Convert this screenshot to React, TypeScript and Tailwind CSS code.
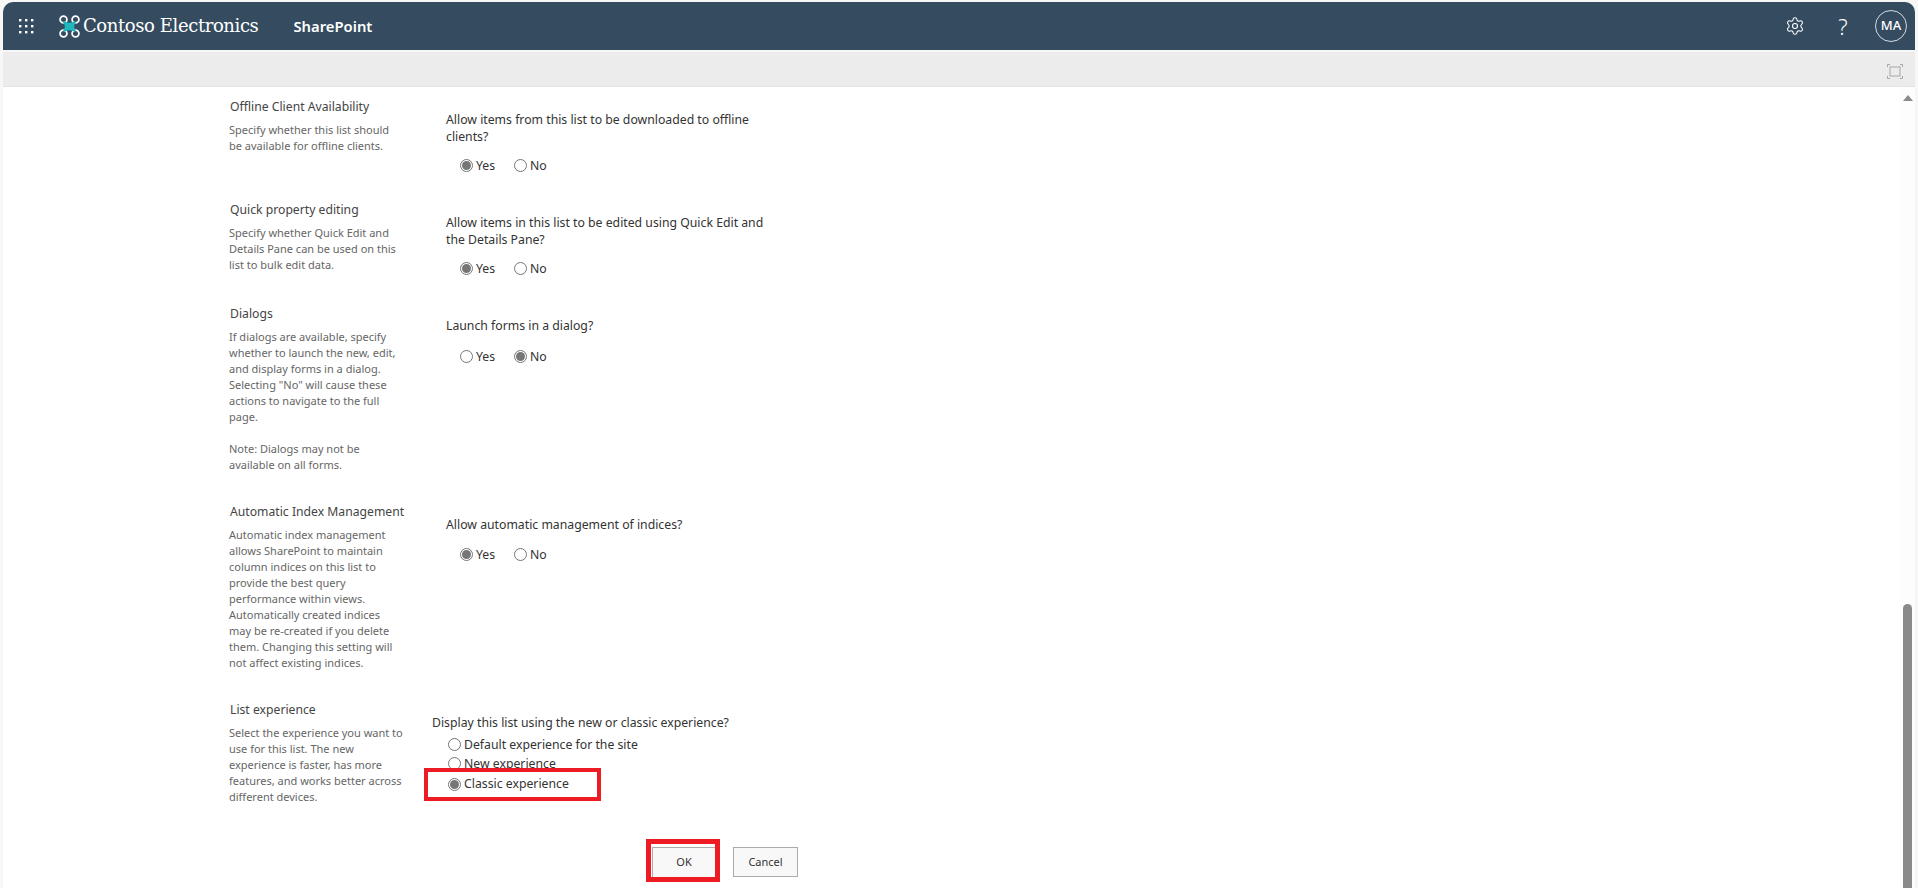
import { Settings } from 'lucide-react'

const Radio = ({ checked = false }: { checked?: boolean }) => (
  <span className="flex h-[13px] w-[13px] shrink-0 items-center justify-center rounded-full border border-[#767676] bg-white">
    {checked && <span className="h-[9px] w-[9px] rounded-full bg-[#767676]" />}
  </span>
)

const YesNo = ({ yes = true, top }: { yes?: boolean; top: string }) => (
  <div className={`flex items-center pl-[14px] text-[12.25px] leading-[17px] text-[#333] ${top}`}>
    <Radio checked={yes} />
    <span className="ml-[3px] w-[38px]">Yes</span>
    <Radio checked={!yes} />
    <span className="ml-[3px]">No</span>
  </div>
)

const Section = ({ title, desc, height, children }: { title: string; desc: string[]; height: string; children: React.ReactNode }) => (
  <section className={`flex ${height}`}>
    <div className="w-[217px] shrink-0">
      <h3 className="pl-px text-[12.2px] leading-[17px] text-[#444]">{title}</h3>
      <div className="mt-[7px] text-[11px] leading-[16px] text-[#666]">
        {desc.map((line, i) => (
          <p key={i} className="h-4 whitespace-nowrap">{line}</p>
        ))}
      </div>
    </div>
    {children}
  </section>
)

const Question = ({ lines, pt = 'pt-[13px]' }: { lines: string[]; pt?: string }) => (
  <div className={`${pt} text-[12.25px] leading-[17px] text-[#333]`}>
    {lines.map((l) => (
      <p key={l} className="whitespace-nowrap">{l}</p>
    ))}
  </div>
)

export default function App() {
  return (
    <div className="h-[888px] w-full overflow-hidden bg-[#f7f7f7] pl-[3px] pr-[3px] pt-[2px] font-['Noto_Sans',sans-serif]">
      <header className="flex h-[48px] items-center rounded-t-[10px] bg-[#344b60] text-white">
        <svg className="ml-[15px]" width="16" height="16" viewBox="0 0 16 16" fill="#fff">
          {[1, 7, 13].map((y) =>
            [1, 7, 13].map((x) => <rect key={`${x}-${y}`} x={x} y={y} width="2.4" height="2.4" />)
          )}
        </svg>
        <svg className="ml-[25px]" width="21" height="23" viewBox="0 0 21 23" fill="none">
          <g stroke="#fff" strokeWidth="1.8">
            <circle cx="4.5" cy="4.5" r="3.4" />
            <circle cx="16.5" cy="4.5" r="3.4" />
            <circle cx="4.5" cy="18.5" r="3.4" />
            <circle cx="16.5" cy="18.5" r="3.4" />
          </g>
          <path d="M5 6 Q10.5 9.5 16 6 L17 7.5 Q13.5 11.5 17 15.5 L16 17 Q10.5 13.5 5 17 L4 15.5 Q7.5 11.5 4 7.5Z" fill="#21b5bd" />
        </svg>
        <span className="ml-[3px] whitespace-nowrap font-['DejaVu_Serif',serif] text-[18px] leading-none tracking-[-0.4px]">Contoso Electronics</span>
        <span className="ml-[35px] text-[14.8px] font-semibold">SharePoint</span>
        <div className="ml-auto flex items-center">
          <Settings size={20} strokeWidth={1.3} />
          <span className="ml-[30px] w-[16px] text-center text-[22px] font-light leading-none">?</span>
          <div className="ml-[24px] mr-[8px] flex h-[32px] w-[32px] items-center justify-center rounded-full border border-[#d5dbe0] text-[13px] font-medium">MA</div>
        </div>
      </header>
      <div className="mt-[2px] flex h-[35px] items-center justify-end border-b border-[#e4e4e4] bg-[#ececec] pr-[12px] pt-[5px]">
        <svg width="16" height="15" viewBox="0 0 16 15" fill="none" stroke="#a6a6a6">
          <path d="M.5 3V.5H3M13 .5h2.5V3M.5 12v2.5H3M13 14.5h2.5V12" />
          <rect x="3" y="3" width="10" height="9" />
        </svg>
      </div>
      <div className="flex h-[801px] bg-white">
        <main className="flex-1 pl-[226px] pt-[11px]">
          <Section
            title="Offline Client Availability"
            desc={['Specify whether this list should', 'be available for offline clients.']}
            height="h-[103px]"
          >
            <div>
              <Question lines={['Allow items from this list to be downloaded to offline', 'clients?']} />
              <YesNo top="mt-[12px]" />
            </div>
          </Section>
          <Section
            title="Quick property editing"
            desc={['Specify whether Quick Edit and', 'Details Pane can be used on this', 'list to bulk edit data.']}
            height="h-[104px]"
          >
            <div>
              <Question lines={['Allow items in this list to be edited using Quick Edit and', 'the Details Pane?']} />
              <YesNo top="mt-[12px]" />
            </div>
          </Section>
          <Section
            title="Dialogs"
            desc={[
              'If dialogs are available, specify',
              'whether to launch the new, edit,',
              'and display forms in a dialog.',
              'Selecting "No" will cause these',
              'actions to navigate to the full',
              'page.',
              '',
              'Note: Dialogs may not be',
              'available on all forms.',
            ]}
            height="h-[198px]"
          >
            <div>
              <Question pt="pt-[12px]" lines={['Launch forms in a dialog?']} />
              <YesNo yes={false} top="mt-[14px]" />
            </div>
          </Section>
          <Section
            title="Automatic Index Management"
            desc={[
              'Automatic index management',
              'allows SharePoint to maintain',
              'column indices on this list to',
              'provide the best query',
              'performance within views.',
              'Automatically created indices',
              'may be re-created if you delete',
              'them. Changing this setting will',
              'not affect existing indices.',
            ]}
            height="h-[198px]"
          >
            <div>
              <Question lines={['Allow automatic management of indices?']} />
              <YesNo top="mt-[13px]" />
            </div>
          </Section>
          <Section
            title="List experience"
            desc={[
              'Select the experience you want to',
              'use for this list. The new',
              'experience is faster, has more',
              'features, and works better across',
              'different devices.',
            ]}
            height="h-[138px]"
          >
            <div className="-ml-[14px]">
              <Question lines={['Display this list using the new or classic experience?']} />
              <div className="mt-[5px] pl-[16px] text-[12.25px] leading-[17px] text-[#333]">
                <div className="flex items-center gap-[3px]"><Radio /><span>Default experience for the site</span></div>
                <div className="mt-[2px] flex items-center gap-[3px]"><Radio /><span>New experience</span></div>
              </div>
              <div className="relative -mt-[4px] -ml-[8px] flex h-[33px] w-[177px] items-center gap-[3px] border-[4px] border-[#ed1c24] bg-white pl-[20px] text-[12.25px] text-[#333]">
                <Radio checked />
                <span>Classic experience</span>
              </div>
            </div>
          </Section>
          <div className="flex items-start pl-[417px]">
            <div className="h-[43px] w-[74px] border-[5px] border-[#ed1c24] pl-px pt-[3px]">
              <button className="h-[30px] w-[63px] border-l border-t border-[#ababab] bg-[#f8f8f8] text-[11px] text-[#333]">OK</button>
            </div>
            <button className="ml-[13px] mt-[8px] h-[30px] w-[65px] border border-[#ababab] bg-[#f8f8f8] text-[11px] text-[#333]">Cancel</button>
          </div>
        </main>
        <div className="flex w-[15px] flex-col items-center bg-[#fdfdfd] pt-[8px]">
          <div className="h-0 w-0 border-x-[5px] border-b-[6px] border-x-transparent border-b-[#8a8a8a]" />
          <div className="mt-auto h-[284px] w-[9px] rounded-t-full bg-[#8a8a8a]" />
        </div>
      </div>
    </div>
  )
}
